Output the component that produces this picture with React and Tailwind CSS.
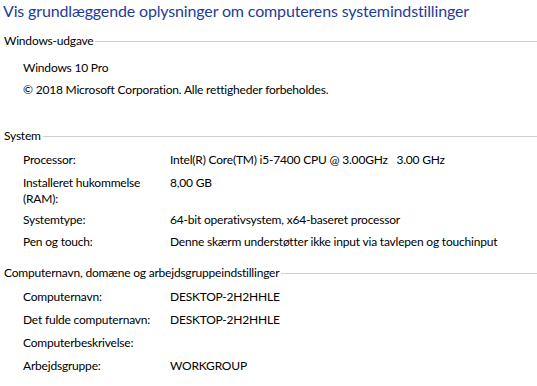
const font = { fontFamily: '"Segoe UI", Lato, "Noto Sans", sans-serif' };

function SectionHeader({ title, className = '' }) {
  return (
    <div className={`flex items-center h-4 pl-1 ${className}`}>
      <span className="whitespace-nowrap">{title}</span>
      <div className="flex-1 h-px bg-[#cfcfcf] ml-0.5 mt-px" />
    </div>
  );
}

function Row({ label, value, className = '' }) {
  return (
    <div className={`flex pl-[23px] leading-4 ${className}`}>
      <span className="w-[147px] shrink-0 whitespace-nowrap">{label}</span>
      <span className="whitespace-pre">{value}</span>
    </div>
  );
}

export default function App() {
  return (
    <div className="w-[537px] h-[386px] bg-white text-[12px] leading-4 tracking-[-0.2px] text-black overflow-hidden" style={font}>
      <h1 className="text-[16px] leading-5 tracking-[-0.15px] text-[#1e3c9a] pl-[3px] pt-px whitespace-nowrap">
        Vis grundlæggende oplysninger om computerens systemindstillinger
      </h1>

      <SectionHeader title="Windows-udgave" className="mt-[12px]" />
      <div className="pl-[23px] mt-[11px]">Windows 10 Pro</div>
      <div className="pl-[23px] mt-[6px]">© 2018 Microsoft Corporation. Alle rettigheder forbeholdes.</div>

      <SectionHeader title="System" className="mt-[30px]" />
      <Row label="Processor:" value="Intel(R) Core(TM) i5-7400 CPU @ 3.00GHz   3.00 GHz" className="mt-[8px]" />
      <Row label={<>Installeret hukommelse<br />(RAM):</>} value="8,00 GB" className="mt-[7px]" />
      <Row label="Systemtype:" value="64-bit operativsystem, x64-baseret processor" className="mt-[5px]" />
      <Row label="Pen og touch:" value="Denne skærm understøtter ikke input via tavlepen og touchinput" className="mt-[6px]" />

      <SectionHeader title="Computernavn, domæne og arbejdsgruppeindstillinger" className="mt-[15px]" />
      <Row label="Computernavn:" value="DESKTOP-2H2HHLE" className="mt-[8px]" />
      <Row label="Det fulde computernavn:" value="DESKTOP-2H2HHLE" className="mt-[7px]" />
      <Row label="Computerbeskrivelse:" value="" className="mt-[7px]" />
      <Row label="Arbejdsgruppe:" value="WORKGROUP" className="mt-[7px]" />
    </div>
  );
}
